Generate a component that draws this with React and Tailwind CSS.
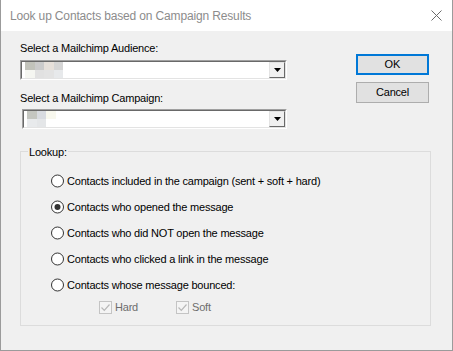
import React from 'react';

const FONT = { fontFamily: '"Liberation Sans", Arial, sans-serif' };

const Combo = ({ width, blocks }) => (
  <div className={`${width} h-[20px] border-t border-l border-[#a0a0a0] border-b border-r border-b-white border-r-white`}>
    <div className="h-full border-t border-l border-[#696969] border-b border-r border-b-[#e3e3e3] border-r-[#e3e3e3] bg-white flex">
      <div className="flex-1 pl-[3px] flex flex-col">
        {blocks.map((row, i) => (
          <div key={i} className="flex h-[8px]">
            {row.map((c, j) => (
              <div key={j} className="w-[9.5px] h-full" style={{ background: c }} />
            ))}
          </div>
        ))}
      </div>
      <div className="w-[16px] h-[16px] border-t border-l border-[#e3e3e3] border-b border-r border-b-[#696969] border-r-[#696969] bg-[#f0f0f0] flex items-center justify-center">
        <svg width="7" height="4" viewBox="0 0 7 4">
          <path d="M0 0h7L3.5 4z" fill="#000" />
        </svg>
      </div>
    </div>
  </div>
);

const Radio = ({ label, checked }) => (
  <div className="h-[26px] flex items-center">
    <svg width="14" height="14" viewBox="0 0 14 14" className="shrink-0">
      <circle cx="6.5" cy="7" r="6" fill="#fff" stroke="#333" strokeWidth="1" />
      {checked && <circle cx="6.5" cy="7" r="3" fill="#333" />}
    </svg>
    <span className="ml-[2px] text-[11px] leading-[13px] tracking-[-0.2px] text-black">{label}</span>
  </div>
);

const Check = ({ label, width }) => (
  <div className={`${width} flex items-center`}>
    <div className="w-[13px] h-[13px] border border-[#c4c4c4] bg-[#f4f4f4] flex items-center justify-center">
      <svg width="11" height="11" viewBox="0 0 11 11">
        <path d="M1.5 5.5l2.8 2.8L9.5 2.5" fill="none" stroke="#b8b8b8" strokeWidth="1.2" />
      </svg>
    </div>
    <span className="ml-[3px] text-[11px] leading-[13px] tracking-[-0.2px] text-[#6d6d6d]">{label}</span>
  </div>
);

export default function App() {
  return (
    <div className="w-[453px] h-[351px] bg-[#f0f0f0] border-x border-b border-[#9b9b9b] flex flex-col" style={FONT}>
      {/* Title bar */}
      <div className="h-[31px] bg-white flex items-center pl-[9px] pr-[10px] shrink-0">
        <span className="text-[12px] leading-[14px] tracking-[-0.15px] text-[#8c8c8c] mt-[1px]">Look up Contacts based on Campaign Results</span>
        <svg className="ml-auto mt-[-1px]" width="11" height="11" viewBox="0 0 11 11">
          <path d="M0.5 0.5l10 10M10.5 0.5l-10 10" stroke="#6b6b6b" strokeWidth="1" />
        </svg>
      </div>

      <div className="flex-1 pl-[19px]">
        <div className="flex">
          <div className="w-[267px] flex flex-col">
            <div className="mt-[11px] text-[11px] leading-[13px] tracking-[-0.2px] text-black">Select a Mailchimp Audience:</div>
            <div className="mt-[5px]">
              <Combo
                width="w-[267px]"
                blocks={[
                  ['#c2c3bb', '#cbcbcb', '#e6e0da', '#d5d5d5'],
                  ['#f5f6f1', '#e1e1e1', '#e3e3e3', '#e7e9eb'],
                ]}
              />
            </div>
            <div className="mt-[12px] text-[11px] leading-[13px] tracking-[-0.2px] text-black">Select a Mailchimp Campaign:</div>
            <div className="mt-[4px] flex justify-end">
              <Combo
                width="w-[265px]"
                blocks={[
                  ['#c4c6c0', '#d8dbe0', '#f8f8ee'],
                  ['#e8eaec', '#e4e6e8', '#ffffff'],
                ]}
              />
            </div>
          </div>
          <div className="ml-[69px] mt-[23px] flex flex-col gap-[7px]">
            <button className="w-[73px] h-[21px] border-2 border-[#0078d7] bg-[#e1e1e1] text-[11px] leading-[13px] text-black">OK</button>
            <button className="w-[73px] h-[21px] border border-[#adadad] bg-[#e1e1e1] text-[11px] leading-[13px] tracking-[-0.2px] text-black">Cancel</button>
          </div>
        </div>

        {/* Lookup group */}
        <div className="relative mt-[22px] w-[411px] h-[175px] border border-[#dcdcdc] pt-[16px] pl-[30px]">
          <span className="absolute top-[-6px] left-[7px] px-[1px] bg-[#f0f0f0] text-[11px] leading-[13px] tracking-[-0.2px] text-black">Lookup:</span>
          <Radio label="Contacts included in the campaign (sent + soft + hard)" />
          <Radio label="Contacts who opened the message" checked />
          <Radio label="Contacts who did NOT open the message" />
          <Radio label="Contacts who clicked a link in the message" />
          <Radio label="Contacts whose message bounced:" />
          <div className="mt-[3px] ml-[48px] flex">
            <Check label="Hard" width="w-[77px]" />
            <Check label="Soft" width="w-[60px]" />
          </div>
        </div>
      </div>
    </div>
  );
}
